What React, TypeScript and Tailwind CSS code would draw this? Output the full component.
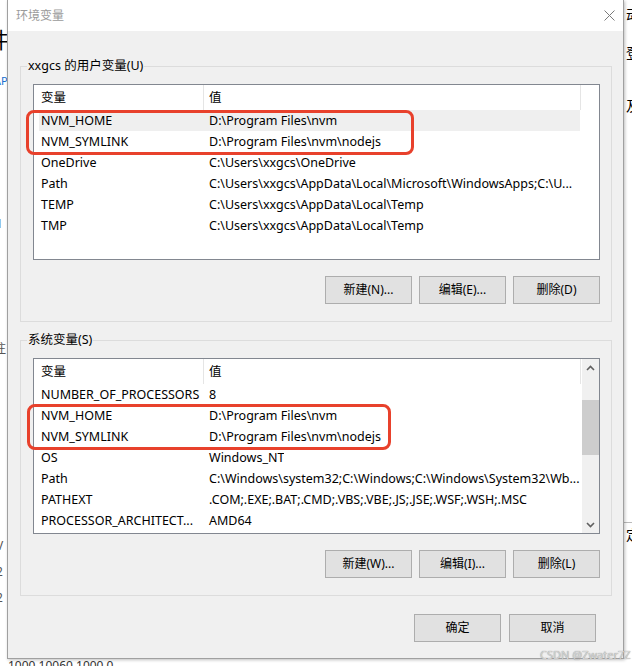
import React from "react";

type Row = [string, string];

const userRows: Row[] = [
  ["NVM_HOME", "D:\\Program Files\\nvm"],
  ["NVM_SYMLINK", "D:\\Program Files\\nvm\\nodejs"],
  ["OneDrive", "C:\\Users\\xxgcs\\OneDrive"],
  ["Path", "C:\\Users\\xxgcs\\AppData\\Local\\Microsoft\\WindowsApps;C:\\U..."],
  ["TEMP", "C:\\Users\\xxgcs\\AppData\\Local\\Temp"],
  ["TMP", "C:\\Users\\xxgcs\\AppData\\Local\\Temp"],
];

const sysRows: Row[] = [
  ["NUMBER_OF_PROCESSORS", "8"],
  ["NVM_HOME", "D:\\Program Files\\nvm"],
  ["NVM_SYMLINK", "D:\\Program Files\\nvm\\nodejs"],
  ["OS", "Windows_NT"],
  ["Path", "C:\\Windows\\system32;C:\\Windows;C:\\Windows\\System32\\Wb..."],
  ["PATHEXT", ".COM;.EXE;.BAT;.CMD;.VBS;.VBE;.JS;.JSE;.WSF;.WSH;.MSC"],
  ["PROCESSOR_ARCHITECT...", "AMD64"],
];

function Btn({ label }: { label: string }) {
  return (
    <button className="flex h-[28px] w-[87px] items-center justify-center border border-[#adadad] bg-[#e1e1e1] text-[12px] leading-none text-black">
      {label}
    </button>
  );
}

function Chevron({ up }: { up: boolean }) {
  return (
    <svg width="9" height="6" viewBox="0 0 9 6">
      <path
        d={up ? "M1 5 L4.5 1.5 L8 5" : "M1 1 L4.5 4.5 L8 1"}
        fill="none"
        stroke="#606060"
        strokeWidth="1.6"
      />
    </svg>
  );
}

function ListBox({ rows, selected, scroll }: { rows: Row[]; selected?: number; scroll?: boolean }) {
  return (
    <div className="flex h-[176px] overflow-hidden border border-[#828790] bg-white">
      <div className="flex min-w-0 flex-1 flex-col">
        <div className="flex h-[25px] shrink-0 text-[12.5px] text-black">
          <div className="flex h-full w-[170px] items-center border-r border-[#e5e5e5] pl-[7px] pt-[1px]">变量</div>
          <div className="flex h-full w-[377px] items-center border-r border-[#e5e5e5] pl-[5px] pt-[1px]">值</div>
        </div>
        {rows.map((r, i) => (
          <div
            key={i}
            className={`ml-[5px] flex h-[21px] w-[541px] shrink-0 items-center whitespace-nowrap pt-[2px] text-[12.5px] text-black ${
              i === selected ? "bg-[#efefef]" : ""
            }`}
          >
            <div className="w-[164px] overflow-hidden pl-[2px]">{r[0]}</div>
            <div className="overflow-hidden pl-[6px]">{r[1]}</div>
          </div>
        ))}
      </div>
      {scroll && (
        <div className="flex w-[17px] shrink-0 flex-col bg-[#f0f0f0]">
          <div className="flex h-[17px] items-center justify-center">
            <Chevron up />
          </div>
          <div className="mt-[24px] h-[55px] w-full bg-[#cdcdcd]" />
          <div className="flex-1" />
          <div className="flex h-[17px] items-center justify-center">
            <Chevron up={false} />
          </div>
        </div>
      )}
    </div>
  );
}

function Group({
  title,
  rows,
  selected,
  scroll,
  buttons,
  className,
}: {
  title: string;
  rows: Row[];
  selected?: number;
  scroll?: boolean;
  buttons: string[];
  className: string;
}) {
  return (
    <fieldset className={`w-[592px] border border-[#dcdcdc] pb-[17px] pl-[12px] pr-[11px] pt-[10px] ${className}`}>
      <legend className="-ml-[6px] px-[1px] text-[12.5px] leading-[16px] text-black">{title}</legend>
      <ListBox rows={rows} selected={selected} scroll={scroll} />
      <div className="mt-[16px] flex justify-end gap-[7px]">
        {buttons.map((b) => (
          <Btn key={b} label={b} />
        ))}
      </div>
    </fieldset>
  );
}

export default function App() {
  return (
    <div className="relative h-[666px] w-[632px] overflow-hidden bg-white font-['Noto_Sans','Noto_Sans_CJK_SC',sans-serif]">
      {/* background window fragments */}
      <div className="absolute inset-0 text-black">
        <span className="absolute left-[-13px] top-[28px] text-[22px] leading-none">件</span>
        <span className="absolute left-[-6px] top-[75px] text-[11px] leading-none text-[#1a6fd0]">AP</span>
        <span className="absolute left-[-4px] top-[176px] text-[12px] leading-none text-[#555]">(</span>
        <span className="absolute left-[-4px] top-[218px] text-[12px] leading-none text-[#555]">1</span>
        <span className="absolute left-[-4px] top-[292px] text-[12px] leading-none text-[#555]">(</span>
        <span className="absolute left-[-6px] top-[343px] text-[12px] leading-none text-[#555]">注</span>
        <span className="absolute left-[-4px] top-[540px] text-[12px] leading-none text-[#555]">V</span>
        <span className="absolute left-[-4px] top-[566px] text-[12px] leading-none text-[#555]">2</span>
        <span className="absolute left-[-4px] top-[592px] text-[12px] leading-none text-[#555]">2</span>
        <span className="absolute left-[626px] top-[8px] text-[14px] leading-none">动</span>
        <span className="absolute left-[626px] top-[46px] text-[14px] leading-none">登</span>
        <span className="absolute left-[626px] top-[99px] text-[14px] leading-none">及</span>
        <span className="absolute left-[626px] top-[528px] text-[14px] leading-none">定</span>
        <div className="absolute left-[624px] top-[522px] h-px w-[8px] bg-[#bbb]" />
        <span className="absolute left-[8px] top-[659px] whitespace-nowrap text-[12px] leading-[14px] text-[#333]">1000 10060 1000 0</span>
      </div>

      {/* dialog */}
      <div className="relative ml-[7px] flex w-[617px] flex-col border-x border-b border-[#a0a0a0] bg-[#f0f0f0] shadow-[1px_1px_3px_rgba(0,0,0,0.25)]">
        <div className="flex h-[31px] items-center justify-between bg-white pl-[8px] pr-[8px]">
          <span className="text-[12px] text-[#9a9a9a]">环境变量</span>
          <svg width="11" height="11" viewBox="0 0 11 11">
            <path d="M0.5 0.5 L10.5 10.5 M10.5 0.5 L0.5 10.5" stroke="#7a7a7a" strokeWidth="1" />
          </svg>
        </div>
        <div className="flex flex-col">
          <Group
            className="ml-[12px] mt-[27px]"
            title="xxgcs 的用户变量(U)"
            rows={userRows}
            selected={0}
            buttons={["新建(N)...", "编辑(E)...", "删除(D)"]}
          />
          <Group
            className="ml-[12px] mt-[10px]"
            title="系统变量(S)"
            rows={sysRows}
            scroll
            buttons={["新建(W)...", "编辑(I)...", "删除(L)"]}
          />
          <div className="mb-[16px] mt-[18px] flex justify-end gap-[8px] pr-[27px]">
            <Btn label="确定" />
            <Btn label="取消" />
          </div>
        </div>
      </div>

      {/* annotations */}
      <div className="absolute left-[26px] top-[110px] h-[45px] w-[388px] rounded-[8px] border-[3px] border-[#e8412c]" />
      <div className="absolute left-[27px] top-[404px] h-[46px] w-[364px] rounded-[8px] border-[3px] border-[#e8412c]" />
      <span className="absolute left-[540px] top-[648px] whitespace-nowrap text-[11px] leading-[14px] text-[#d6d6d6] [text-shadow:0_0_1px_#777]">
        CSDN @Zwater7Z
      </span>
    </div>
  );
}
